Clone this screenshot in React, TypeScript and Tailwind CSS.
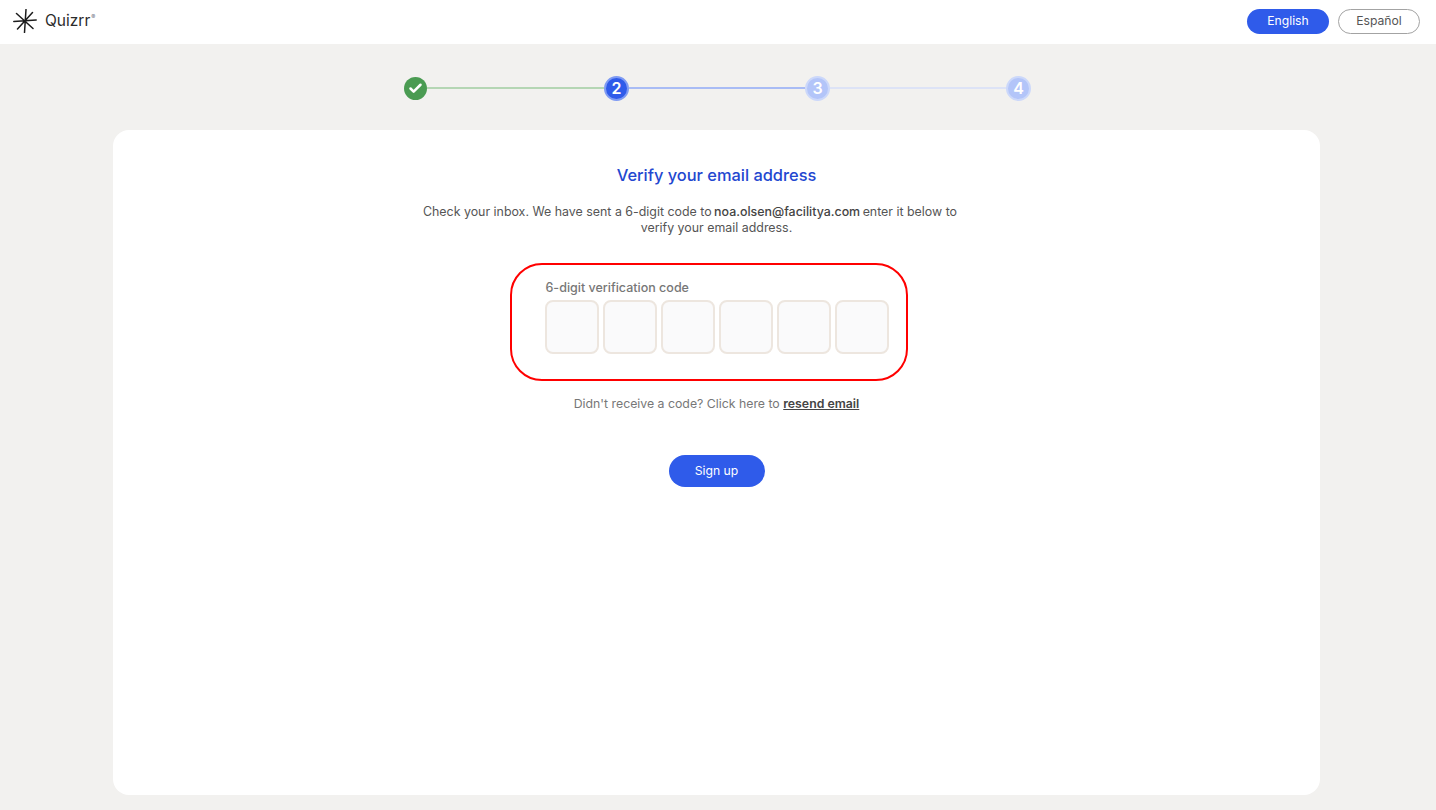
import { Check } from 'lucide-react';

const font = { fontFamily: 'Inter, "Liberation Sans", sans-serif' };

function Logo() {
  return (
    <div className="flex items-center gap-[8px] -mt-[2px]">
      <svg width="24" height="24" viewBox="0 0 24 24" fill="none" stroke="#1c1c1c" strokeWidth="1.5" strokeLinecap="round">
        <path d="M13 .5 11.5 23.5M.8 12.5 23.2 11M3.5 4.5 20 19.5M19.5 3.5 4.5 20" />
      </svg>
      <span className="flex items-start text-[15.5px] text-[#2b2b2b] leading-none">
        Quizrr<span className="text-[6px] leading-[8px] ml-px text-gray-500">®</span>
      </span>
    </div>
  );
}

function Stepper() {
  return (
    <div className="flex items-center h-6 w-[628px] mx-auto">
      <div className="w-[23px] h-[23px] rounded-full bg-[#4a9b52] flex items-center justify-center shrink-0">
        <Check size={15} strokeWidth={4} className="text-white" />
      </div>
      <div className="w-[177px] h-[2px] bg-[#b5d6b4]" />
      <div className="w-[25px] h-[25px] rounded-full bg-[#2f5bea] border-2 border-[#7f9bf3] text-white text-[16px] font-semibold flex items-center justify-center shrink-0">2</div>
      <div className="w-[176px] h-[2px] bg-[#a9bcf5]" />
      <div className="w-[25px] h-[25px] rounded-full bg-[#b3c5f9] border-2 border-[#ccd8fa] text-white text-[16px] font-semibold flex items-center justify-center shrink-0">3</div>
      <div className="w-[176px] h-[2px] bg-[#dde3f6]" />
      <div className="w-[25px] h-[25px] rounded-full bg-[#b3c5f9] border-2 border-[#ccd8fa] text-white text-[16px] font-semibold flex items-center justify-center shrink-0">4</div>
    </div>
  );
}

export default function App() {
  return (
    <div className="min-h-screen h-[810px] bg-[#f2f1ef] flex flex-col overflow-hidden" style={font}>
      <header className="h-[44px] bg-white flex items-center justify-between pl-[13px] pr-4 shrink-0">
        <Logo />
        <div className="flex items-center gap-[9px] -mt-[2px]">
          <button className="w-[82px] h-[25px] rounded-full bg-[#2f5bea] text-white text-[12.2px]">English</button>
          <button className="w-[82px] h-[25px] rounded-full bg-white border border-[#a3a3a3] text-[#555] text-[12.2px]">Español</button>
        </div>
      </header>

      <div className="pt-[32px] shrink-0">
        <Stepper />
      </div>

      <main className="mt-[30px] mr-[116px] ml-[113px] h-[665px] bg-white rounded-2xl flex flex-col items-center pt-[34px]">
        <h1 className="text-[16.4px] leading-[22px] font-medium text-[#2347d0]">Verify your email address</h1>
        <p className="mt-[18px] text-center text-[12.4px] leading-[16px] text-[#555]">
          {/* first line sits off-centre in the picture */}
          <span className="block mr-[53px]">
            Check your inbox. We have sent a 6-digit code to <span className="font-medium text-[#444] mx-[-1px]">noa.olsen@facilitya.com</span> enter it below to
          </span>
          <span className="block">verify your email address.</span>
        </p>

        <div className="relative mt-[44px] w-[344px]">
          <label className="block pl-px text-[12.5px] leading-4 font-medium text-[#777] mb-[4px]">6-digit verification code</label>
          <div className="flex gap-1">
            {[0, 1, 2, 3, 4, 5].map((i) => (
              <input key={i} className="w-[54px] h-[54px] rounded-lg bg-[#fafafb] border-2 border-[#ede6df]" />
            ))}
          </div>
          {/* red annotation around the field */}
          <div className="absolute -left-[35px] -top-[17px] w-[398px] h-[118px] rounded-[32px] border-2 border-[#ff0000] pointer-events-none" />
        </div>

        <p className="mt-[42px] text-[12.3px] leading-4 text-[#777]">
          Didn't receive a code? Click here to <a className="font-semibold text-[#444] underline">resend email</a>
        </p>

        <button className="mt-[43px] w-[96px] h-[32px] rounded-full bg-[#2f5bea] text-white text-[12.2px]">Sign up</button>
      </main>
    </div>
  );
}
